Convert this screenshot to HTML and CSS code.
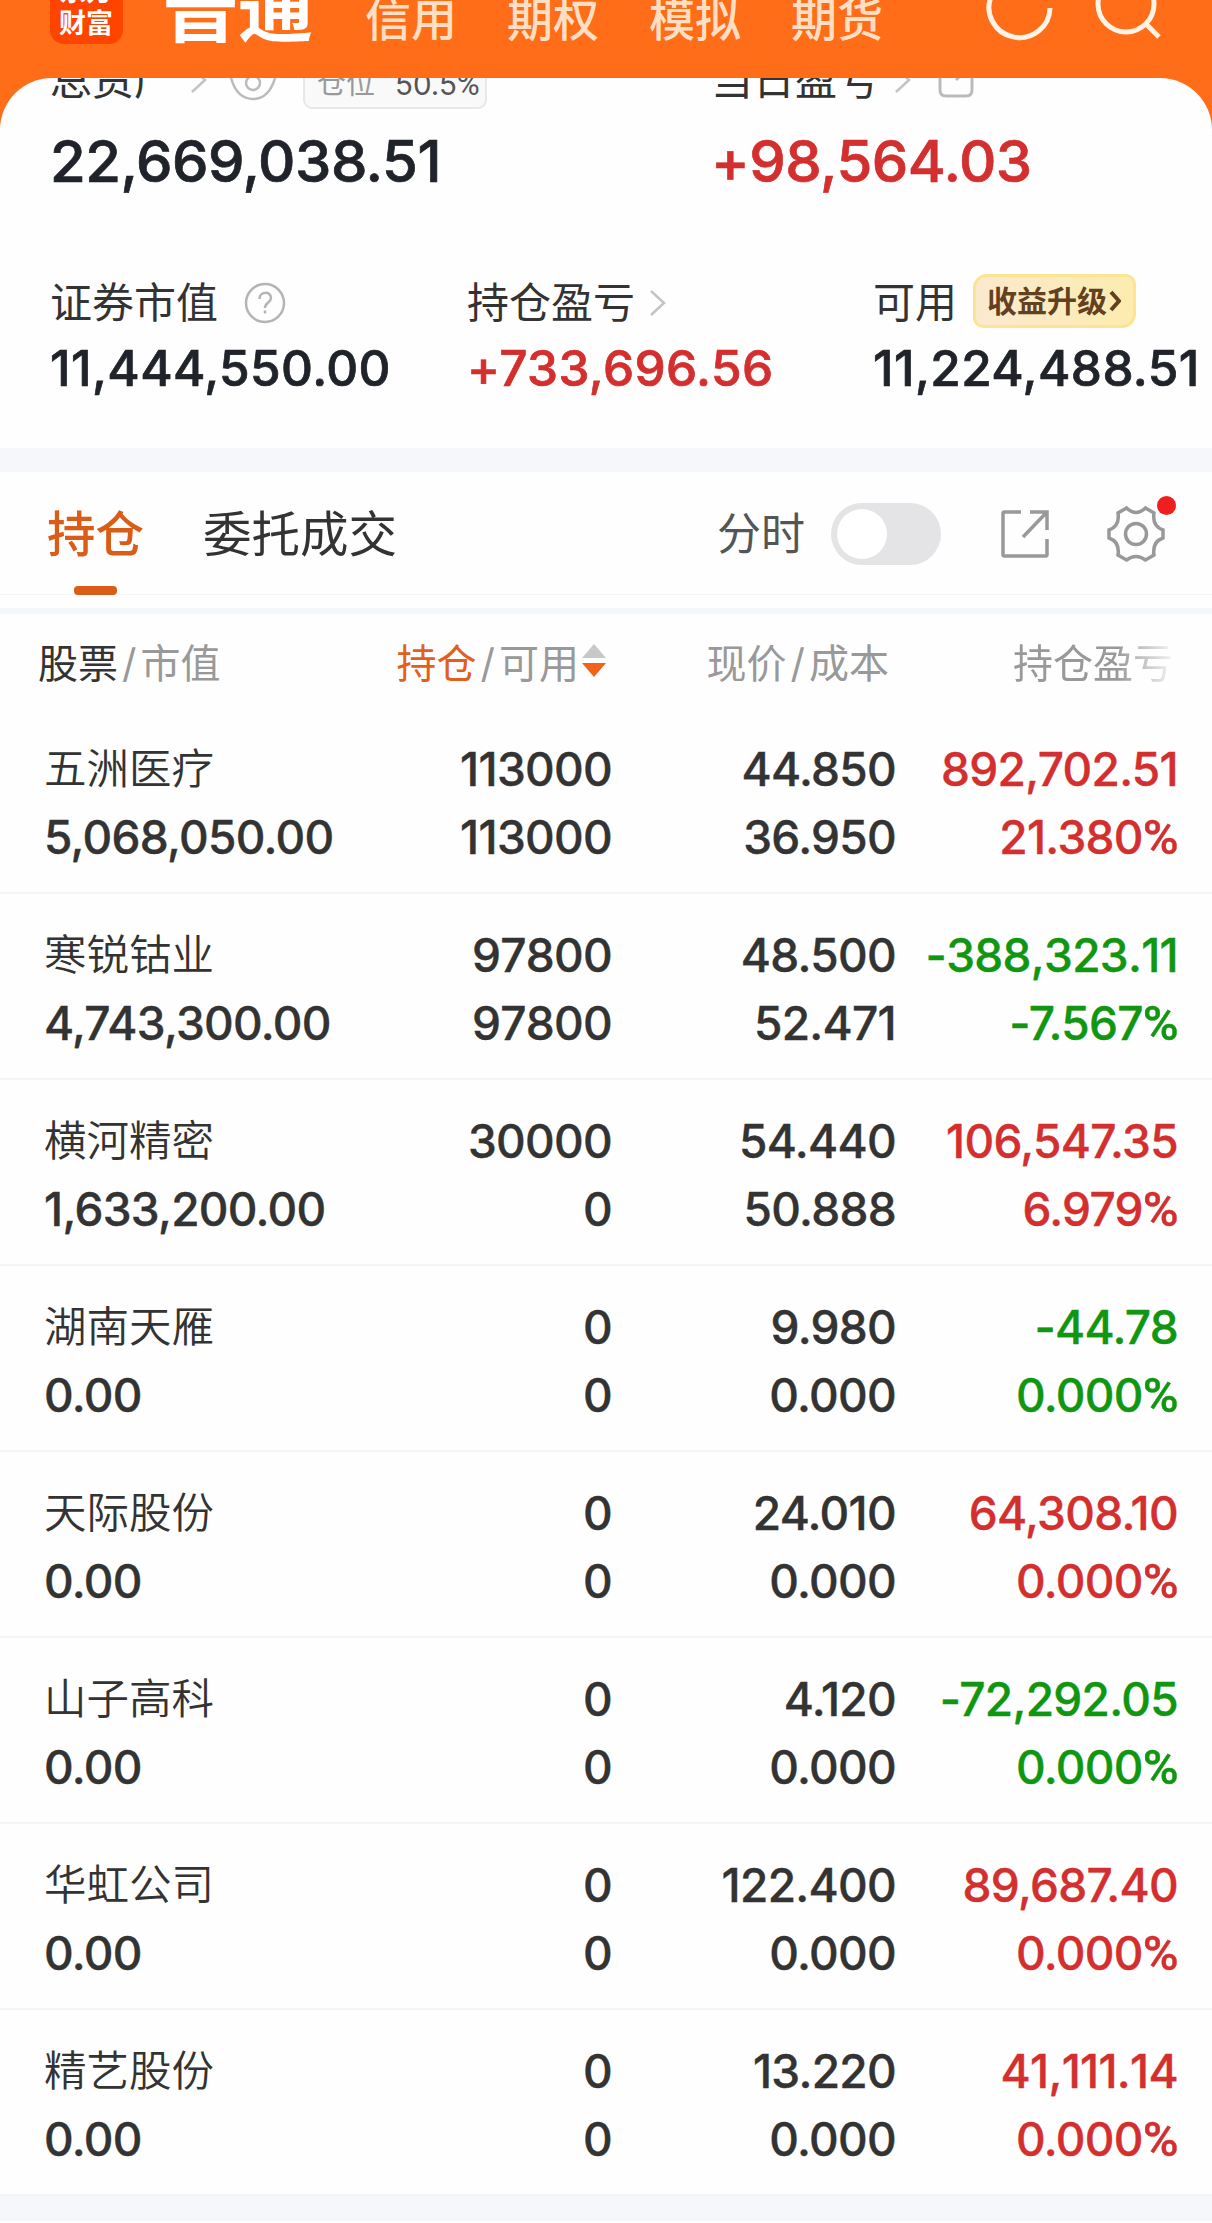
FILE: index.html
```html
<!DOCTYPE html>
<html lang="zh-CN">
<head>
  <meta charset="UTF-8">
  <title>持仓</title>
  <link rel="stylesheet" href="styles.css">
</head>
<body>
  <header id="top">
    <div class="logo"><span>东方</span><span>财富</span></div>
    <nav class="markets">
      <a class="current">普通</a>
      <a>信用</a>
      <a>期权</a>
      <a>模拟</a>
      <a>期货</a>
    </nav>
    <svg class="top-icons" width="160" height="78" viewBox="0 0 160 78">
      <path d="M63 8a30.500 30 0 1 1-13-25"/>
      <circle cx="139" cy="4" r="28"/>
      <path d="M159 24l13 13"/>
    </svg>
  </header>

  <main>
    <section class="summary">
      <div class="total-labels">
        <div class="label total">
          <span>总资产</span>
          <svg class="chev" width="20" height="28" viewBox="0 0 20 28"><path d="M3 2l13 12L3 26"/></svg>
          <svg class="eye" width="48" height="48" viewBox="0 0 48 48"><path d="M2 22C8 8 16 4 24 4s16 4 22 18C42 36 34 43 24 43S6 36 2 22z"/><circle cx="24" cy="27" r="7"/></svg>
          <div class="ratio"><span>仓位</span><b>50.5<em>%</em></b></div>
        </div>
        <div class="label today">
          <span>当日盈亏</span>
          <svg class="chev" width="20" height="28" viewBox="0 0 20 28"><path d="M3 2l13 12L3 26"/></svg>
          <svg class="share" width="36" height="36" viewBox="0 0 36 36"><path d="M18 2H8Q2 2 2 8v20q0 6 6 6h20q6 0 6-6V16M18 18L33 3"/></svg>
        </div>
      </div>
      <div class="totals">
        <div class="big">22,669,038.51</div>
        <div class="big up">+98,564.03</div>
      </div>
      <div class="details">
        <div>
          <div class="label">证券市值
            <svg class="help" width="42" height="42" viewBox="0 0 42 42"><circle cx="21" cy="21" r="19"/><path d="M15.500 17c0-8 11.500-8 11.500-1 0 4.500-6 4.500-6 10"/><path d="M21 28.500v3"/></svg>
          </div>
          <div class="mid">11,444,550.00</div>
        </div>
        <div>
          <div class="label">持仓盈亏
            <svg class="chev" width="20" height="28" viewBox="0 0 20 28"><path d="M3 2l13 12L3 26"/></svg>
          </div>
          <div class="mid up">+733,696.56</div>
        </div>
        <div>
          <div class="label">可用
            <span class="upgrade">收益升级<svg width="12" height="22" viewBox="0 0 12 22"><path d="M2 2l8 9-8 9"/></svg></span>
          </div>
          <div class="mid">11,224,488.51</div>
        </div>
      </div>
    </section>

    <section class="tabs">
      <a class="tab active">持仓</a>
      <a class="tab">委托成交</a>
      <div class="tools">
        <span>分时</span>
        <div class="toggle"></div>
        <svg class="export" width="48" height="48" viewBox="0 0 48 48"><path d="M20 2H3.500Q2 2 2 3.500v41Q2 46 3.500 46h41q1.500 0 1.500-1.500V29M29 2h17v18M46 2L22 27"/></svg>
        <div class="gear">
          <svg width="58" height="58" viewBox="0 0 58 58"><path d="M19.500 3Q29 12 38.500 3L47 8Q45 21 56 25V33Q45 37 47 50L38.500 55Q29 48 19.500 55L11 50Q13 37 2 33V25Q13 21 11 8z"/><circle cx="29" cy="29" r="10.500"/></svg>
          <i></i>
        </div>
      </div>
    </section>
    <div class="strip"></div>

    <section class="list">
      <div class="head">
        <div><b>股票</b><i>/</i>市值</div>
        <div><b class="sorted">持仓</b><i>/</i>可用<svg width="24" height="34" viewBox="0 0 24 34"><path class="asc" d="M12 0l12 14H0z"/><path class="desc" d="M0 19h24L12 33z"/></svg></div>
        <div>现价<i>/</i>成本</div>
        <div class="fade">持仓盈亏</div>
      </div>
      <div id="rows"></div>
    </section>
  </main>

  <script>
    // 名称, 市值, 持仓, 可用, 现价, 成本, 盈亏, 盈亏比例, 涨跌
    const STOCKS = [
      ['五洲医疗', '5,068,050.00', '113000', '113000', '44.850', '36.950', '892,702.51', '21.380', 'up'],
      ['寒锐钴业', '4,743,300.00', '97800', '97800', '48.500', '52.471', '-388,323.11', '-7.567', 'down'],
      ['横河精密', '1,633,200.00', '30000', '0', '54.440', '50.888', '106,547.35', '6.979', 'up'],
      ['湖南天雁', '0.00', '0', '0', '9.980', '0.000', '-44.78', '0.000', 'down'],
      ['天际股份', '0.00', '0', '0', '24.010', '0.000', '64,308.10', '0.000', 'up'],
      ['山子高科', '0.00', '0', '0', '4.120', '0.000', '-72,292.05', '0.000', 'down'],
      ['华虹公司', '0.00', '0', '0', '122.400', '0.000', '89,687.40', '0.000', 'up'],
      ['精艺股份', '0.00', '0', '0', '13.220', '0.000', '41,111.14', '0.000', 'up']
    ];
    const rows = document.getElementById('rows');
    STOCKS.forEach(([name, value, qty, free, price, cost, profit, rate, dir]) => {
      const row = document.createElement('div');
      row.className = 'row';
      // 连续的 1 不做字距压缩
      const wide = profit.includes('11') ? 'wide' : '';
      row.innerHTML = `
        <div><p class="name">${name}</p><p>${value}</p></div>
        <div class="wide"><p>${qty}</p><p>${free}</p></div>
        <div><p>${price}</p><p>${cost}</p></div>
        <div class="${dir}"><p class="${wide}">${profit}</p><p>${rate}<em>%</em></p></div>`;
      rows.appendChild(row);
    });
  </script>
</body>
</html>
```

FILE: styles.css
```css
* {
  box-sizing: border-box;
}
body {
  margin: 0;
  width: 1212px;
  height: 2223px;
  overflow: hidden;
  background: #fefefe;
  color: #333;
  font-family: Inter, "Noto Sans CJK SC", sans-serif;
}
p {
  margin: 0;
}
em {
  font-family: Roboto, sans-serif;
  font-size: 1.06em;
  font-style: normal;
  line-height: 1;
}
svg {
  fill: none;
  stroke: #bbb;
  stroke-width: 2.5;
  flex: none;
}
#top {
  display: flex;
  height: 138px;
  margin-bottom: -60px;
  padding-left: 50px;
  overflow: hidden;
  background: #ff6d18;
}
.logo {
  display: flex;
  flex-direction: column;
  justify-content: flex-end;
  width: 73px;
  height: 74px;
  margin-top: -30px;
  padding: 0 0 4px 9px;
  border-radius: 14px;
  background: #ff4400;
  color: #fff;
  font-size: 27px;
  font-weight: 700;
  line-height: 32px;
}
.markets {
  display: flex;
  gap: 50px;
  margin-left: 40px;
  color: #ffdfc4;
  font-size: 46px;
  font-weight: 500;
  line-height: 60px;
}
.markets a {
  width: 92px;
  margin-top: -11px;
  white-space: nowrap;
}
.markets .current {
  width: 152px;
  margin-top: -21px;
  color: #fff;
  font-size: 75px;
  font-weight: 700;
}
.top-icons {
  margin-left: 104px;
  overflow: visible;
  stroke: #fff3e6;
  stroke-width: 5;
}
main {
  position: relative;
  background: #fefefe;
  border-radius: 52px 52px 0 0;
}
.summary {
  height: 370px;
}
.total-labels {
  display: flex;
  height: 36px;
  overflow: hidden;
}
.label {
  display: flex;
  align-items: center;
  height: 60px;
  font-size: 42px;
  line-height: 60px;
  white-space: nowrap;
}
.total-labels .label {
  margin-top: -28px;
}
.total {
  flex: none;
  width: 711px;
  padding-left: 50px;
}
.chev {
  stroke: #c4c4c4;
}
.total .chev {
  margin-left: 13px;
}
.eye {
  margin-left: 20px;
}
.ratio {
  display: flex;
  gap: 20px;
  width: 184px;
  height: 58px;
  margin-left: 26px;
  padding-left: 12px;
  border: 2px solid #e8e8e8;
  border-radius: 9px;
  background: #f9f9f9;
  color: #999;
  font-size: 29px;
  line-height: 62px;
}
.ratio b {
  color: #555;
  font-size: 29.500px;
  font-weight: 400;
}
.today .chev {
  margin-left: 14px;
}
.share {
  margin-left: 25px;
  stroke-width: 3;
}
.totals {
  display: flex;
  height: 93px;
  padding-left: 50px;
}
.big, .mid {
  color: #20242a;
  font-weight: 500;
  white-space: nowrap;
  -webkit-text-stroke: 0.7px;
}
.big {
  flex: none;
  width: 661px;
  font-size: 58px;
  line-height: 94px;
  letter-spacing: -0.5px;
}
.big.up {
  width: 480px;
}
.details {
  display: flex;
  padding: 66px 0 0 50px;
}
.details > div {
  flex: none;
  width: 417px;
}
.details > div:nth-child(2) {
  width: 406px;
}
.details > div:last-child {
  width: 339px;
}
.help {
  margin-left: 26px;
  stroke: #b4b4b4;
}
.details .chev {
  margin-left: 13px;
}
.upgrade {
  display: flex;
  align-items: center;
  gap: 2px;
  width: 163px;
  height: 54px;
  margin: -4px 0 0 16px;
  padding-left: 11px;
  border: 3px solid #fbe594;
  border-radius: 14px 10px 14px 10px;
  background: linear-gradient(90deg, #fbe9cf, #fcecae);
  color: #63411f;
  font-size: 30px;
  font-weight: 700;
}
.upgrade svg {
  stroke: #63411f;
  stroke-width: 4;
}
.mid {
  font-size: 49.500px;
  line-height: 71px;
  letter-spacing: 0.4px;
}
.up, .big.up, .mid.up {
  color: #d32f2f;
}
.down {
  color: #119611;
}
.tabs {
  display: flex;
  height: 147px;
  padding-left: 47px;
  border-top: 24px solid #f5f7fa;
  border-bottom: 1px solid #f4f4f5;
}
.tab {
  margin-right: 59px;
  font-size: 48.500px;
  line-height: 126px;
}
.tab.active {
  position: relative;
  color: #d95c17;
  font-weight: 500;
}
.tab.active::after {
  content: "";
  position: absolute;
  left: 27px;
  bottom: -1px;
  width: 43px;
  height: 9px;
  border-radius: 4px;
  background: #d95c17;
}
.tools {
  display: flex;
  align-items: center;
  height: 124px;
  margin-left: auto;
  padding-right: 47px;
  color: #555;
  font-size: 44px;
}
.tools span {
  line-height: 60px;
}
.toggle {
  width: 110px;
  height: 62px;
  margin-left: 26px;
  padding: 6px;
  border-radius: 31px;
  background: #e4e4e6;
}
.toggle::before {
  content: "";
  display: block;
  width: 50px;
  height: 50px;
  border-radius: 50%;
  background: #fff;
}
.export {
  margin-left: 60px;
  stroke: #999;
  stroke-width: 3.5;
}
.gear {
  position: relative;
  height: 58px;
  margin-left: 58px;
}
.gear svg {
  stroke: #999;
  stroke-width: 3.5;
}
.gear i {
  position: absolute;
  top: -9px;
  right: -11px;
  width: 19px;
  height: 19px;
  border-radius: 50%;
  background: #f01f1f;
}
.strip {
  height: 19px;
  border-bottom: 6px solid #f4f7fa;
}
.head, .row {
  display: grid;
  text-align: right;
}
.head {
  grid-template-columns: 300px 268px 283px 284px;
  height: 94px;
  padding-left: 38px;
  color: #999;
  font-size: 40px;
  line-height: 100px;
}
.head b {
  color: #333;
  font-weight: 400;
}
.head .sorted {
  color: #e0601c;
}
.head i {
  padding: 0 4px;
  font-style: normal;
}
.head svg {
  margin-left: 3px;
  stroke: none;
}
.asc {
  fill: #c8c8c8;
}
.desc {
  fill: #f26218;
}
.head > :first-child, .row > :first-child {
  text-align: left;
}
.fade {
  -webkit-mask-image: linear-gradient(90deg, #000 228px, transparent 290px);
  mask-image: linear-gradient(90deg, #000 228px, transparent 290px);
}
.row {
  grid-template-columns: 300px 268px 284px 282px;
  height: 186px;
  padding: 27px 0 0 44px;
  border-bottom: 2px solid #f5f5f5;
  font-size: 46px;
  font-weight: 500;
  line-height: 68px;
}
.row p {
  height: 68px;
  letter-spacing: -0.7px;
  -webkit-text-stroke: 0.4px;
}
.row .wide {
  font-kerning: none;
}
.row .name {
  font-size: 42.500px;
  font-weight: 350;
  letter-spacing: 0;
  -webkit-text-stroke: 0;
}
#rows {
  border-bottom: 25px solid #f5f7fa;
}
```
